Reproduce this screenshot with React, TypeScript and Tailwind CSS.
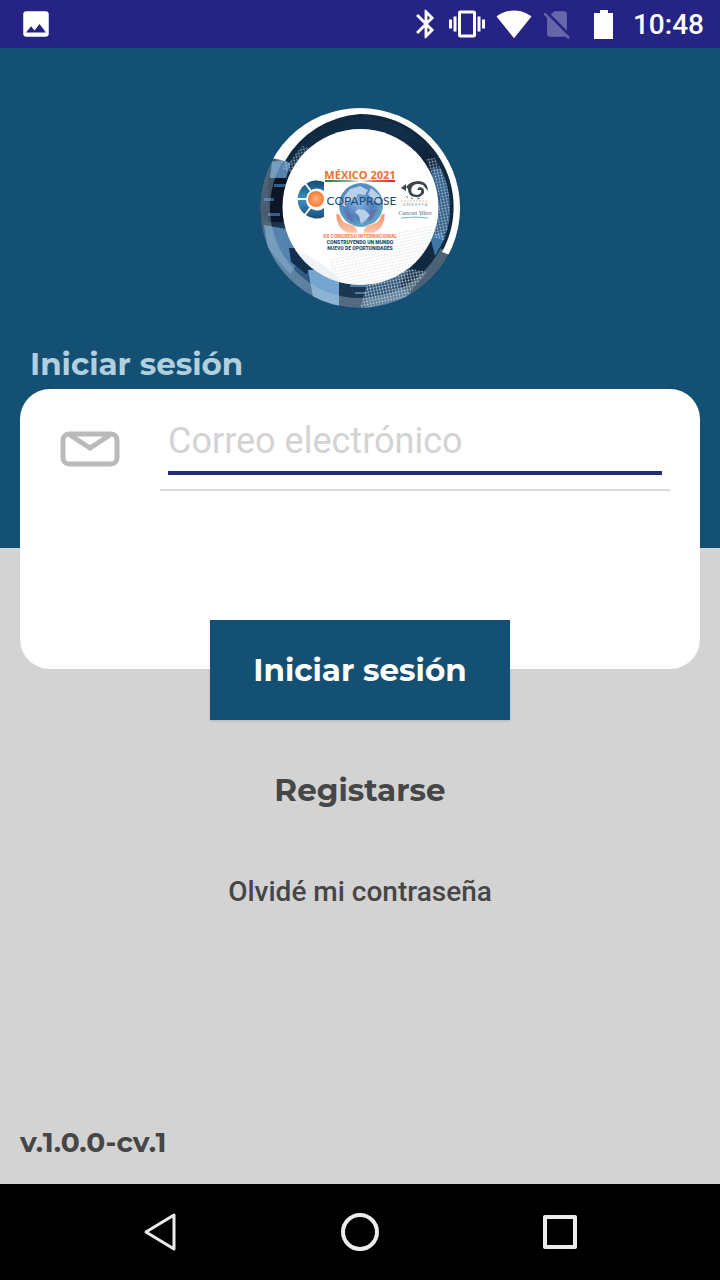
import { MdBluetooth, MdImage, MdSignalCellularNoSim, MdSignalWifi4Bar, MdVibration } from 'react-icons/md'

const StatusBar = () => (
  <header className="flex h-12 items-center justify-between bg-[#252383] pl-[19px] pr-4 text-white">
    <MdImage className="size-[34px]" />
    <div className="flex items-center">
      <MdBluetooth className="size-[34px]" />
      <MdVibration className="ml-1.5 size-9" />
      <MdSignalWifi4Bar className="ml-[11px] size-9" />
      <MdSignalCellularNoSim className="ml-2 size-[34px] opacity-30" />
      <svg className="ml-5 h-[29px] w-5" viewBox="0 0 20 29" fill="currentColor">
        <path d="M6 0h8v3h5v26H0V3h6z" />
      </svg>
      <time className="ml-[19px] pt-0.5 text-[28px] leading-8 font-medium">10:48</time>
    </div>
  </header>
)

const Logo = () => (
  <svg className="mx-auto block size-[200px]" viewBox="0 0 200 200" role="img" aria-label="COPAPROSE México 2021">
    <defs>
      <clipPath id="badge">
        <circle cx="100" cy="100" r="100" />
      </clipPath>
      <clipPath id="disc">
        <circle cx="100.500" cy="99" r="78" />
      </clipPath>
      <linearGradient id="photo" x1="0" y1="0" x2="0.3" y2="1">
        <stop offset="0" stopColor="#0b2237" />
        <stop offset="0.3" stopColor="#12304b" />
        <stop offset="0.5" stopColor="#0d2036" />
        <stop offset="0.7" stopColor="#356590" />
        <stop offset="1" stopColor="#274d70" />
      </linearGradient>
      <linearGradient id="flag">
        <stop offset="0" stopColor="#12823f" />
        <stop offset="0.35" stopColor="#7cb88d" />
        <stop offset="0.5" stopColor="#ffffff" />
        <stop offset="0.7" stopColor="#ea6a55" />
        <stop offset="1" stopColor="#d8232a" />
      </linearGradient>
      <radialGradient id="globe" cx="0.45" cy="0.45">
        <stop offset="0" stopColor="#8cb6e0" />
        <stop offset="0.65" stopColor="#4f80bc" />
        <stop offset="1" stopColor="#5f9fc4" />
      </radialGradient>
      <radialGradient id="orange">
        <stop offset="0" stopColor="#ffb27f" />
        <stop offset="1" stopColor="#f47b36" />
      </radialGradient>
      <linearGradient id="segment" x1="0" y1="0" x2="0" y2="1">
        <stop offset="0" stopColor="#124a76" />
        <stop offset="0.5" stopColor="#3f93bc" />
        <stop offset="1" stopColor="#174f7b" />
      </linearGradient>
      <linearGradient id="hands" x1="0" y1="0" x2="0" y2="1">
        <stop offset="0" stopColor="#f58f63" />
        <stop offset="1" stopColor="#fbc9ae" />
      </linearGradient>
      <pattern id="dots" width="3" height="3" patternUnits="userSpaceOnUse" patternTransform="rotate(-12)">
        <circle cx="1.500" cy="1.500" r="0.9" fill="#d4e2ee" />
      </pattern>
      <pattern id="softDots" width="3" height="3" patternUnits="userSpaceOnUse" patternTransform="rotate(-12)">
        <circle cx="1.500" cy="1.500" r="0.8" fill="#cfd3d8" />
      </pattern>
    </defs>

    {/* Photo ring */}
    <g clipPath="url(#badge)">
      <rect width="200" height="200" fill="url(#photo)" />
      <path d="M12 54l20-4-6 20H10zM4 117l22 4 16 28-12 17L8 140z" fill="#5583ae" />
      <path d="M8 70h18v44H8z" fill="#0b1526" />
      <path d="M4 90h10v3H4zM14 76h12v3H14zM8 105h12v3H8z" fill="#2f5f8c" />
      <path d="M29 140h14l12 20-9 6-15-12z" fill="#12304e" />
      <path d="M48 162l18-1 15 14v25H55z" fill="#76a5cf" />
      <path d="M79 172h27v28H79z" fill="#1c3752" />
      <path d="M90 176h16v3H90zM95 184h12v2H95z" fill="#4c7aa1" />
      <path d="M166 136l28-16v30l-35 40-20-12z" fill="#112940" />
      <path d="M170 128l12-4 3 6-10 18z" fill="#3f77a8" />
      <path d="M172 60l18 2 5 50-16 12z" fill="#2c5a84" />
      <path d="M28 42l14-4 12 3-22 24-9-4z" fill="url(#dots)" opacity="0.7" />
      <path d="M166 51l15-2 12 40-5 45-14-5 6-40z" fill="url(#dots)" opacity="0.8" />
      <path d="M107 175l45-14 15 3-22 26-45 12z" fill="url(#dots)" />
      <circle cx="100" cy="100" r="95" fill="none" stroke="#b6cddd" strokeOpacity="0.35" strokeWidth="10" />
      <path d="M26 53A94 94 0 0 1 100 6A94 94 0 0 1 184 142" fill="none" stroke="#10293e" strokeWidth="8" />
      <path d="M12 50A100 100 0 0 1 190 147L182 144A93 93 0 0 0 100 6A94 94 0 0 0 25 53Z" fill="#fff" />
    </g>

    <circle cx="100.500" cy="99" r="78" fill="#fff" />
    <g clipPath="url(#disc)">
      <path d="M70 151q50-15 72-28l40-8v70H70z" fill="url(#softDots)" opacity="0.7" />
      <path d="M30 140q40 14 60 45H30z" fill="#e8eef4" opacity="0.7" />
    </g>

    <text x="100" y="71" textAnchor="middle" fontFamily="'Open Sans', sans-serif" fontSize="11" fontWeight="700" fill="#ee7129">
      MÉXICO 2021
    </text>
    <path d="M65 72h70v2H65z" fill="url(#flag)" />

    {/* Globe held by two hands */}
    <circle cx="101" cy="97" r="22" fill="url(#globe)" />
    <path d="M85 87l5-6 10-3 8 4-3 5-7-1-3 6-7 2-3 5-4-3zM111 80l8 7 2 9-8-3-5-7zM98 101l7 1 5 5-4 5-5 4-2-8-4-4z" fill="#b9d0e8" />
    <path d="M84 102l8 6 2 7-7-5zM111 102l7-1-6 10-4 2z" fill="#755da5" opacity="0.6" />
    <g fill="url(#hands)" stroke="#fff" strokeWidth="0.5">
      <path d="M76 106q4-1 5 4 2 5 8 6 8 1 9 9H87q-11-5-11-19z" />
      <path d="M125 106q-4-1-5 4-2 5-8 6-8 1-9 9h11q11-5 11-19z" />
    </g>

    {/* Segmented C mark */}
    <path d="M64 74a19 19 0 1 0 0 35v-9a11 11 0 1 1 0-17z" fill="url(#segment)" />
    <path d="M36 91h10M44 74l7 9M44 108l7-9" stroke="#fff" strokeWidth="2" />
    <circle cx="56" cy="91" r="8" fill="url(#orange)" />
    <text x="101.500" y="97" textAnchor="middle" fontFamily="Lato, sans-serif" fontSize="12" fill="#1d4b70">
      COPAPROSE
    </text>

    {/* Venue emblem */}
    <path d="M141 80l5-4v7zM146 79q4-6 13-6 9 1 9 10l-5-6q-8-3-11 2-3 7 5 8 5-1 4-5h-4l2-3q6 0 5 6-3 5-9 4-7-1-7-8z" fill="#3c454b" />
    <path d="M146 88l2 2M151 90l2 1M157 91l3-1" stroke="#3e83ac" strokeWidth="1" />
    <path d="M141 93h27" stroke="#efbf9f" strokeWidth="1" strokeDasharray="2 1" />
    <text x="155" y="98" textAnchor="middle" fontFamily="Lato, sans-serif" fontSize="4" fill="#7591a4">O M E X F Y A</text>
    <text x="155" y="107" textAnchor="middle" fontFamily="'Liberation Serif', serif" fontStyle="italic" fontSize="6" fill="#4d6475">Cancun Vibes</text>
    <path d="M141 110q15-2 27 0" fill="none" stroke="#70b5c7" strokeWidth="1" />

    <g fontFamily="Roboto, sans-serif" fontSize="5" fontWeight="800" textAnchor="middle">
      <text x="100" y="130" fill="#f28452">XX CONGRESO INTERNACIONAL</text>
      <text x="100" y="136" fill="#164568">CONSTRUYENDO UN MUNDO</text>
      <text x="100" y="142" fill="#164568">NUEVO DE OPORTUNIDADES</text>
    </g>
  </svg>
)

const MailIcon = () => (
  <svg className="h-9 w-[60px] shrink-0" viewBox="0 0 60 36" fill="none" stroke="#bababa" strokeWidth="5">
    <rect x="3" y="3" width="54" height="30" rx="6" />
    <path d="M10 4l20 13L50 4" />
  </svg>
)

const NavigationBar = () => (
  <nav className="flex h-24 items-center justify-center gap-[152px] bg-black text-[#ececec]">
    <button type="button" aria-label="Atrás">
      <svg className="size-12" viewBox="0 0 48 48" fill="none" stroke="currentColor" strokeWidth="3" strokeLinejoin="round">
        <path d="M38 7v34L10 24z" />
      </svg>
    </button>
    <button type="button" aria-label="Inicio">
      <svg className="size-12" viewBox="0 0 48 48" fill="none" stroke="currentColor" strokeWidth="4">
        <circle cx="24" cy="24" r="17" />
      </svg>
    </button>
    <button type="button" aria-label="Recientes">
      <svg className="size-12" viewBox="0 0 48 48" fill="none" stroke="currentColor" strokeWidth="4" strokeLinejoin="round">
        <path d="M9 9h30v30H9z" />
      </svg>
    </button>
  </nav>
)

export default function App() {
  return (
    <div className="flex min-h-screen flex-col bg-[#d3d3d3] font-[Roboto,sans-serif] text-[#464646]">
      <StatusBar />

      <main className="flex flex-1 flex-col">
        <section className="bg-[#145073] pt-[60px] pb-[164px]">
          <Logo />
          <h1 className="mt-9 px-[30px] font-[Montserrat,Inter,sans-serif] text-[31px] leading-10 font-bold text-[#b2cfdf]">
            Iniciar sesión
          </h1>
        </section>

        {/* The card overlaps the blue section, the button overlaps the card */}
        <form className="-mt-[159px] flex flex-col" onSubmit={(e) => e.preventDefault()}>
          <div className="mx-5 flex min-h-[280px] items-start rounded-[30px] bg-white pr-[30px] pl-10">
            <div className="pt-[42px]">
              <MailIcon />
            </div>
            <div className="ml-10 flex-1 border-b-2 border-[#dadada] px-2 pt-5 pb-3.5">
              <input
                type="email"
                aria-label="Correo electrónico"
                placeholder="Correo electrónico"
                className="block h-[66px] w-full border-b-4 border-[#252a7e] pt-0.5 text-4xl outline-none placeholder:text-[#d3d3d3]"
              />
            </div>
          </div>
          <button
            type="submit"
            className="-mt-[49px] h-[100px] w-[300px] self-center bg-[#145073] font-[Montserrat,Inter,sans-serif] text-[31px] font-bold text-white shadow-sm"
          >
            Iniciar sesión
          </button>
        </form>

        <div className="mt-[50px] flex flex-col items-center">
          <a href="#registro" className="font-[Montserrat,Inter,sans-serif] text-[31px] leading-10 font-bold">
            Registarse
          </a>
          <a href="#contrasena" className="mt-[62px] text-[28px] leading-10 font-medium">
            Olvidé mi contraseña
          </a>
        </div>

        <p className="mt-auto px-5 pb-6 font-[Montserrat,Inter,sans-serif] text-[28px] leading-9 font-bold">v.1.0.0-cv.1</p>
      </main>

      <NavigationBar />
    </div>
  )
}
